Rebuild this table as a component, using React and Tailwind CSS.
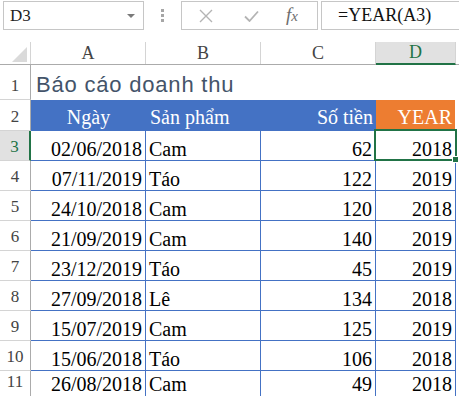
const rows = [
  ['02/06/2018', 'Cam', 62, 2018],
  ['07/11/2019', 'Táo', 122, 2019],
  ['24/10/2018', 'Cam', 120, 2018],
  ['21/09/2019', 'Cam', 140, 2019],
  ['23/12/2019', 'Táo', 45, 2019],
  ['27/09/2018', 'Lê', 134, 2018],
  ['15/07/2019', 'Cam', 125, 2019],
  ['15/06/2018', 'Táo', 106, 2018],
  ['26/08/2018', 'Cam', 49, 2018],
]

const serif = "[font-family:'Liberation_Serif','Times_New_Roman',serif]"

function TopBar() {
  return (
    <div className="flex h-[42px] items-start pt-px">
      <div className="ml-[3px] flex h-[29px] w-[141px] items-center justify-between border border-[#c6c6c6] pl-[6px] pr-[8px]">
        <span className={`${serif} text-[17px] text-[#222]`}>D3</span>
        <svg width="8" height="4" viewBox="0 0 8 4">
          <path d="M0 0h8L4 4z" fill="#7a7a7a" />
        </svg>
      </div>
      <div className="flex h-[29px] w-[37px] flex-col items-center justify-center gap-[2px]">
        <div className="h-[3px] w-[3px] bg-[#a6a6a6]" />
        <div className="h-[3px] w-[3px] bg-[#a6a6a6]" />
        <div className="h-[3px] w-[3px] bg-[#a6a6a6]" />
      </div>
      <div className="flex h-[29px] w-[137px] items-center border border-[#c6c6c6]">
        <div className="flex w-[48px] justify-center">
          <svg width="14" height="14" viewBox="0 0 14 14">
            <path d="M1 1l12 12M13 1L1 13" stroke="#b4b4b4" strokeWidth="1.4" />
          </svg>
        </div>
        <div className="flex w-[42px] justify-center">
          <svg width="15" height="12" viewBox="0 0 15 12">
            <path d="M1 6.5l4.5 4.5L14 1.5" stroke="#b4b4b4" strokeWidth="1.8" fill="none" />
          </svg>
        </div>
        <div className={`flex w-[40px] items-baseline justify-center ${serif} text-[19px] italic text-[#6e6e6e]`}>
          f<span className="text-[15px]">x</span>
        </div>
      </div>
      <div className="ml-[3px] flex h-[29px] flex-1 items-center border border-r-0 border-[#c6c6c6] pl-[16px]">
        <span className={`${serif} text-[18px] text-[#111]`}>=YEAR(A3)</span>
      </div>
    </div>
  )
}

function ColHeader() {
  const cols = ['A', 'B', 'C']
  return (
    <div className={`flex h-[23px] border-b border-[#ababab] ${serif} text-[18px] text-[#444]`}>
      <div className="relative w-[31px] border-r border-[#d4d4d4]">
        <svg className="absolute bottom-[2px] right-[3px]" width="15" height="15" viewBox="0 0 15 15">
          <path d="M15 0V15H0z" fill="#dadada" />
        </svg>
      </div>
      {cols.map((c) => (
        <div key={c} className="flex w-[115px] items-center justify-center border-r border-[#d4d4d4]">
          {c}
        </div>
      ))}
      <div className="-mb-px flex w-[80px] items-center justify-center border-b-2 border-r border-[#217346] border-r-[#d4d4d4] bg-[#e1e1e1] text-[#217346]">
        D
      </div>
    </div>
  )
}

function RowNum({ n, active, last }) {
  return (
    <div
      className={`flex w-[31px] shrink-0 items-end justify-center border-b border-r border-b-[#d4d4d4] ${last ? 'pb-[8px]' : 'pb-[3px]'} ${serif} text-[17px] leading-[20px] ${
        active ? 'border-r-2 border-r-[#217346] bg-[#e1e1e1] text-[#217346]' : 'border-r-[#ababab] text-[#444]'
      }`}
    >
      {n}
    </div>
  )
}

export default function App() {
  return (
    <div className="relative h-[396px] w-[459px] overflow-hidden bg-white">
      <TopBar />
      <ColHeader />

      <div className="flex h-[35px]">
        <RowNum n={1} />
        <div className="flex items-end whitespace-nowrap pb-[1px] pl-[5px] [font-family:'Liberation_Sans',Arial,sans-serif] text-[22px] leading-[28px] tracking-[0.8px] text-[#44546a]">
          Báo cáo doanh thu
        </div>
      </div>

      <div className={`flex h-[31px] ${serif} text-[20px] leading-[22px] text-white`}>
        <RowNum n={2} />
        <div className="flex w-[115px] items-end justify-center bg-[#4472c4] pb-[3px]">Ngày</div>
        <div className="flex w-[115px] items-end bg-[#4472c4] pb-[3px] pl-[4px]">Sản phẩm</div>
        <div className="flex w-[115px] items-end justify-end bg-[#4472c4] pb-[3px] pr-[3px]">Số tiền</div>
        <div className="flex w-[80px] items-end justify-end border-r border-white bg-[#ed7d31] pb-[3px] pr-[3px]">YEAR</div>
      </div>

      {rows.map((r, i) => {
        const last = i === rows.length - 1
        const pad = last ? 'pb-[5px]' : ''
        return (
          <div key={i} className={`flex h-[30px] ${serif} text-[20px] leading-[22px] text-black`}>
            <RowNum n={i + 3} active={i === 0} last={last} />
            <div className={`flex w-[115px] items-end justify-end border-b border-r border-[#4472c4] pr-[3px] ${pad}`}>{r[0]}</div>
            <div className={`flex w-[115px] items-end border-b border-r border-[#4472c4] pl-[3px] ${pad}`}>{r[1]}</div>
            <div className={`flex w-[115px] items-end justify-end border-b border-r border-[#4472c4] pr-[3px] ${pad}`}>{r[2]}</div>
            <div className={`flex w-[80px] items-end justify-end border-b border-r border-[#4472c4] pr-[3px] ${pad}`}>{r[3]}</div>
          </div>
        )
      })}

      <div className="absolute left-[374px] top-[129px] h-[32px] w-[83px] border-2 border-[#217346]">
        <div className="absolute -bottom-[4px] -right-[4px] h-[7px] w-[7px] border border-white bg-[#217346]" />
      </div>
    </div>
  )
}
